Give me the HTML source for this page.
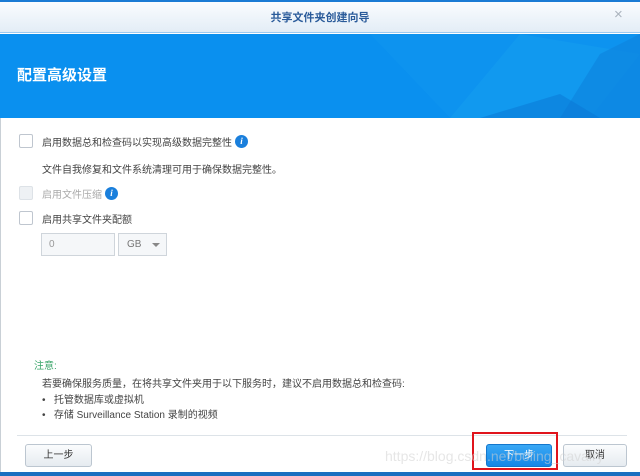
<!DOCTYPE html>
<html><head><meta charset="utf-8"><style>
*{margin:0;padding:0;box-sizing:border-box}
body{width:640px;height:476px;overflow:hidden;background:#fff;font-family:"Liberation Sans","Noto Sans CJK SC",sans-serif;font-size:10px;color:#444;position:relative}
.abs{position:absolute}
.cb{position:absolute;width:14px;height:14px;border:1px solid #bfc6cf;background:#fff;border-radius:2px}
.info{position:absolute;width:13px;height:13px;border-radius:50%;background:#1a7fdc;color:#fff;font:italic bold 9px "Liberation Serif",serif;text-align:center;line-height:13px}
.btn{position:absolute;height:23px;border:1px solid #bcc6d0;border-radius:3px;background:linear-gradient(#fbfcfd,#e6ebf0);text-align:center;line-height:21px;color:#333;font-size:10px}
</style></head><body>
<div class="abs" style="left:0;top:0;width:640px;height:2px;background:#1b7bd4"></div>
<div class="abs" style="left:0;top:2px;width:640px;height:31px;background:linear-gradient(#fafcfe,#e3edf6);border-bottom:1px solid #9ccaf0"></div>
<div class="abs" style="left:0;top:9px;width:640px;text-align:center;font-size:11px;font-weight:bold;color:#2a5b9a">共享文件夹创建向导</div>
<div class="abs" style="left:614px;top:6px;font-size:15px;color:#aab3bd">×</div>
<div class="abs" style="left:0;top:34px;width:640px;height:84px;background:#0a90ef;overflow:hidden">
<svg width="640" height="84" style="position:absolute;left:0;top:0">
<polygon points="370,0 640,0 640,84 450,84" fill="#0f96ef" opacity=".5"/>
<polygon points="520,0 640,20 590,84 450,84" fill="#1aa2f1" opacity=".4"/>
<polygon points="600,20 640,0 640,84 560,84" fill="#0d82dc" opacity=".6"/>
<polygon points="480,84 560,60 600,84" fill="#0a76d4" opacity=".5"/>
</svg>
<div class="abs" style="left:17px;top:30px;font-size:15px;font-weight:bold;color:#fff">配置高级设置</div>
</div>
<div class="abs" style="left:0;top:118px;width:1px;height:354px;background:#c9d0d6"></div>
<div class="cb" style="left:19px;top:134px"></div>
<div class="abs" style="left:42px;top:134px">启用数据总和检查码以实现高级数据完整性</div>
<div class="info" style="left:235px;top:135px">i</div>
<div class="abs" style="left:42px;top:161px">文件自我修复和文件系统清理可用于确保数据完整性。</div>
<div class="cb" style="left:19px;top:186px;background:#eef1f4;border-color:#dde2e7"></div>
<div class="abs" style="left:42px;top:186px;color:#aaa">启用文件压缩</div>
<div class="info" style="left:105px;top:187px">i</div>
<div class="cb" style="left:19px;top:211px"></div>
<div class="abs" style="left:42px;top:211px">启用共享文件夹配额</div>
<div class="abs" style="left:41px;top:233px;width:74px;height:23px;border:1px solid #cfd5db;background:#f5f7f9;padding:5px 7px;color:#999">0</div>
<div class="abs" style="left:118px;top:233px;width:49px;height:23px;border:1px solid #cfd5db;background:#f5f7f9;padding:5px 8px;color:#777">GB <span style="position:absolute;left:33px;top:9px;border:4px solid transparent;border-top:4px solid #888"></span></div>
<div class="abs" style="left:34px;top:357px;color:#3aa56a">注意:</div>
<div class="abs" style="left:42px;top:375px">若要确保服务质量，在将共享文件夹用于以下服务时，建议不启用数据总和检查码:</div>
<div class="abs" style="left:42px;top:391px">•&nbsp;&nbsp;&nbsp;托管数据库或虚拟机</div>
<div class="abs" style="left:42px;top:406px">•&nbsp;&nbsp;&nbsp;存储 Surveillance Station 录制的视频</div>
<div class="abs" style="left:17px;top:435px;width:610px;height:1px;background:#dde3e8"></div>
<div class="btn" style="left:25px;top:444px;width:67px">上一步</div>
<div class="btn" style="left:486px;top:444px;width:66px;background:linear-gradient(#3aa8f5,#1487e6);border-color:#1477cc;color:#fff">下一步</div>
<div class="btn" style="left:563px;top:444px;width:64px">取消</div>
<div class="abs" style="left:472px;top:432px;width:86px;height:38px;border:2px solid #e0141c"></div>
<div class="abs" style="left:385px;top:448px;font-size:14px;color:rgba(210,210,210,.55)">https://blog.csdn.net/boling_cavalry</div>
<div class="abs" style="left:0;top:472px;width:640px;height:4px;background:#1b6fc0"></div>
</body></html>
